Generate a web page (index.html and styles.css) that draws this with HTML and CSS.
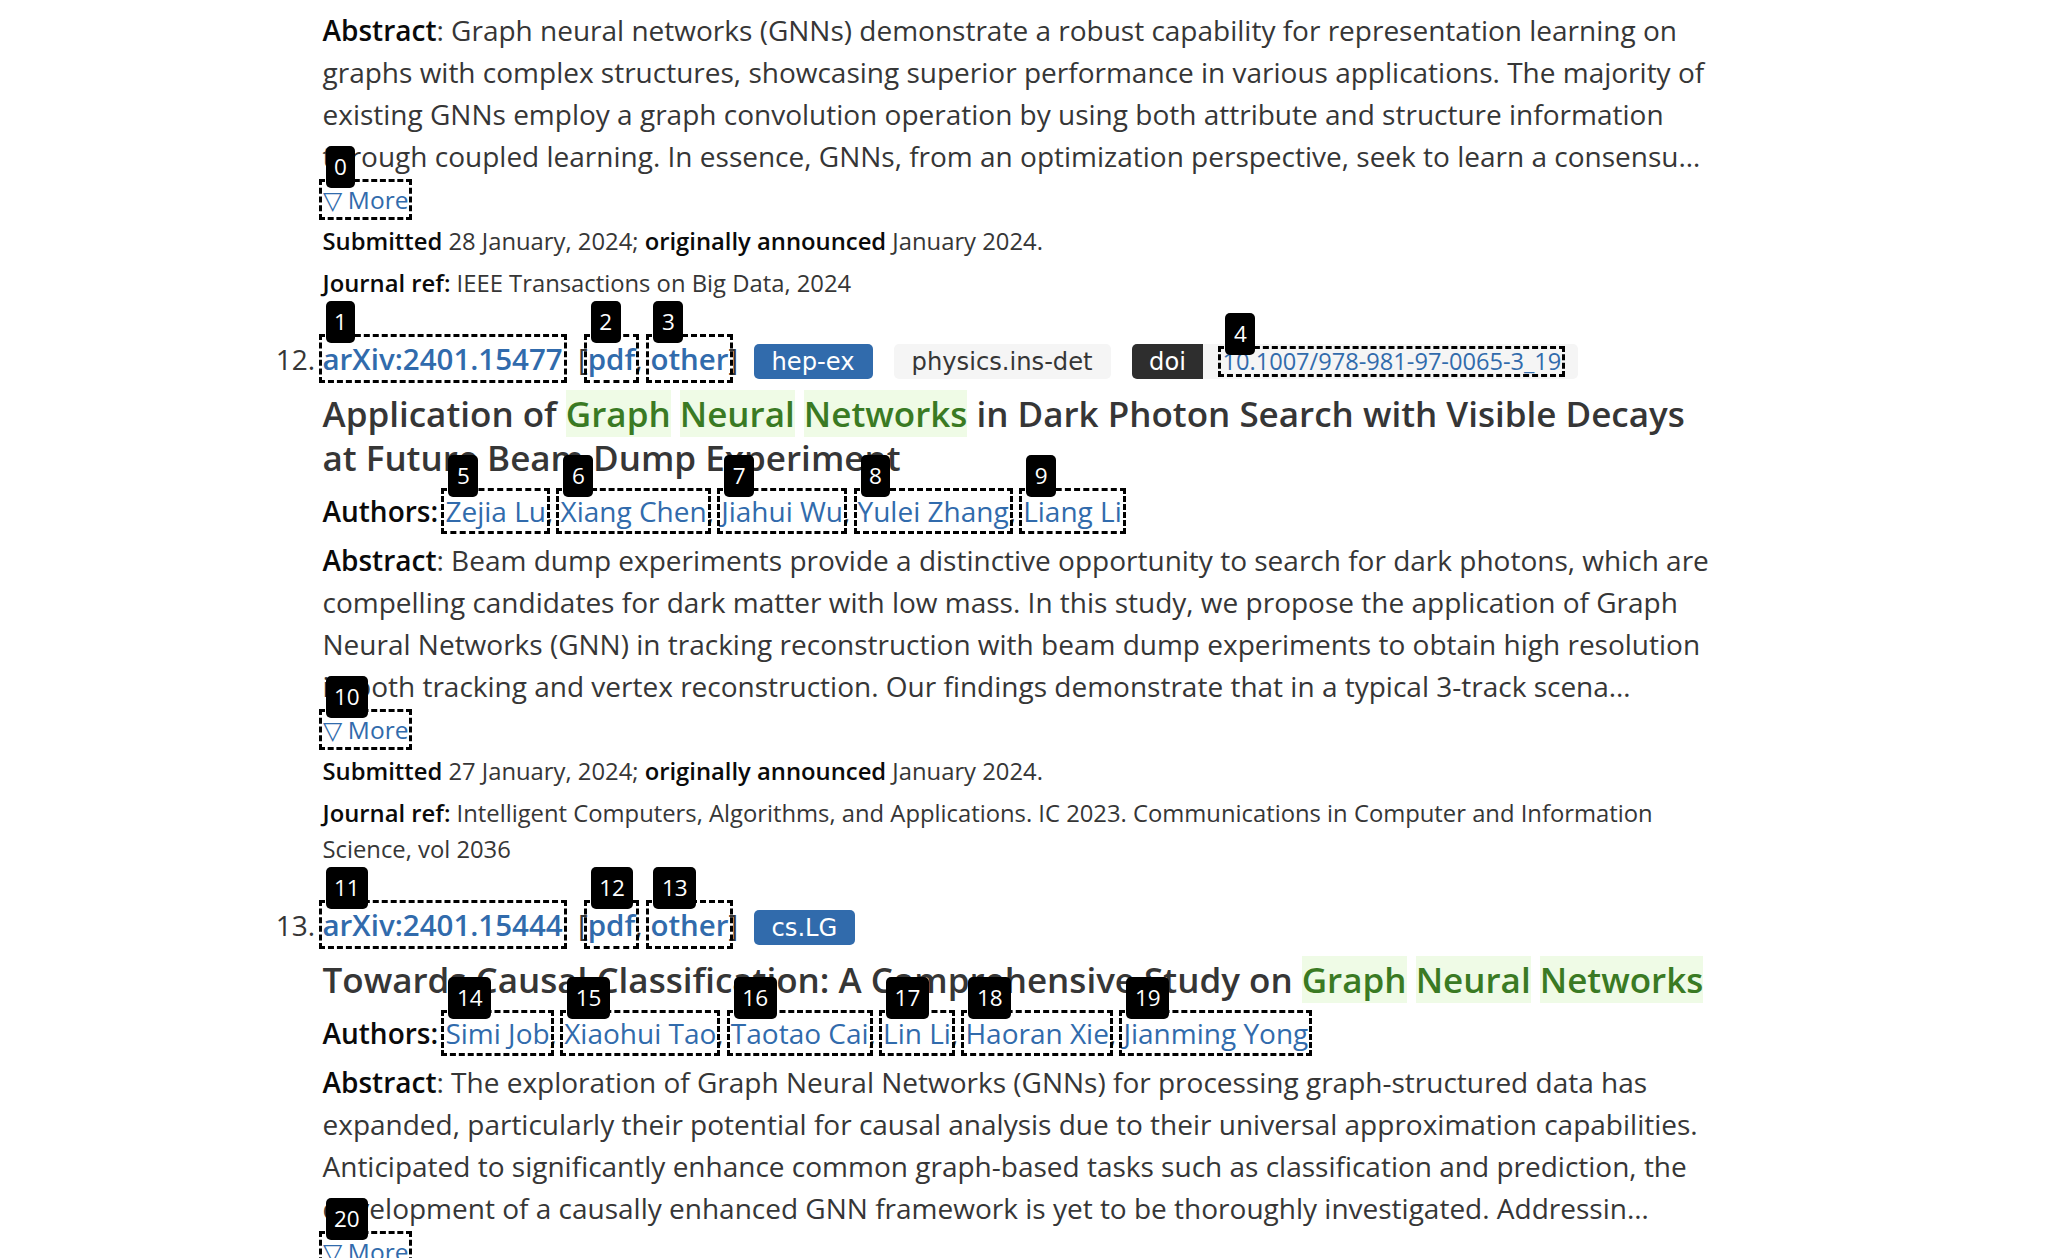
FILE: index.html
```html
<!DOCTYPE html>
<html lang="en">
<head>
<meta charset="utf-8">
<title>arXiv search results</title>
<link rel="stylesheet" href="styles.css">
</head>
<body>
<main class="page">
  <ol class="results" start="11">
    <li class="result is-cut">
      <p class="abstract"><span class="strong">Abstract</span>: Graph neural networks (GNNs) demonstrate a robust capability for representation learning on graphs with complex structures, showcasing superior performance in various applications. The majority of existing GNNs employ a graph convolution operation by using both attribute and structure information through coupled learning. In essence, GNNs, from an optimization perspective, seek to learn a consensu…<br><a class="more ann" href="#">▽ More<span class="badge">0</span></a></p>
      <p class="meta"><span class="strong">Submitted</span> 28 January, 2024; <span class="strong">originally announced</span> January 2024.</p>
      <p class="meta comments"><span class="strong">Journal ref:</span> IEEE Transactions on Big Data, 2024</p>
    </li>

    <li class="result">
      <div class="result-head"><span class="list-title"><a class="ann" href="#">arXiv:2401.15477<span class="badge">1</span></a>&nbsp; [<a class="ann" href="#">pdf<span class="badge">2</span></a>, <a class="ann" href="#">other<span class="badge">3</span></a>]&nbsp; </span><span class="tags"><span class="tag is-link">hep-ex</span><span class="tag is-grey">physics.ins-det</span><span class="tag-group"><span class="tag is-dark">doi</span><span class="tag is-light"><a class="ann doi-link" href="#">10.1007/978-981-97-0065-3_19<span class="badge">4</span></a></span></span></span></div>
      <p class="title">Application of <span class="hit">Graph</span> <span class="hit">Neural</span> <span class="hit">Networks</span> in Dark Photon Search with Visible Decays at Future Beam Dump Experiment</p>
      <p class="authors"><span class="strong">Authors:</span> <a class="ann" href="#">Zejia Lu<span class="badge">5</span></a>, <a class="ann" href="#">Xiang Chen<span class="badge">6</span></a>, <a class="ann" href="#">Jiahui Wu<span class="badge">7</span></a>, <a class="ann" href="#">Yulei Zhang<span class="badge">8</span></a>, <a class="ann" href="#">Liang Li<span class="badge">9</span></a></p>
      <p class="abstract"><span class="strong">Abstract</span>: Beam dump experiments provide a distinctive opportunity to search for dark photons, which are compelling candidates for dark matter with low mass. In this study, we propose the application of Graph Neural Networks (GNN) in tracking reconstruction with beam dump experiments to obtain high resolution in both tracking and vertex reconstruction. Our findings demonstrate that in a typical 3-track scena…<br><a class="more ann" href="#">▽ More<span class="badge">10</span></a></p>
      <p class="meta"><span class="strong">Submitted</span> 27 January, 2024; <span class="strong">originally announced</span> January 2024.</p>
      <p class="meta comments"><span class="strong">Journal ref:</span> Intelligent Computers, Algorithms, and Applications. IC 2023. Communications in Computer and Information Science, vol 2036</p>
    </li>

    <li class="result">
      <div class="result-head"><span class="list-title"><a class="ann" href="#">arXiv:2401.15444<span class="badge">11</span></a>&nbsp; [<a class="ann" href="#">pdf<span class="badge">12</span></a>, <a class="ann" href="#">other<span class="badge">13</span></a>]&nbsp; </span><span class="tags"><span class="tag is-link">cs.LG</span></span></div>
      <p class="title">Towards Causal Classification: A Comprehensive Study on <span class="hit">Graph</span> <span class="hit">Neural</span> <span class="hit">Networks</span></p>
      <p class="authors"><span class="strong">Authors:</span> <a class="ann" href="#">Simi Job<span class="badge">14</span></a>, <a class="ann" href="#">Xiaohui Tao<span class="badge">15</span></a>, <a class="ann" href="#">Taotao Cai<span class="badge">16</span></a>, <a class="ann" href="#">Lin Li<span class="badge">17</span></a>, <a class="ann" href="#">Haoran Xie<span class="badge">18</span></a>, <a class="ann" href="#">Jianming Yong<span class="badge">19</span></a></p>
      <p class="abstract"><span class="strong">Abstract</span>: The exploration of Graph Neural Networks (GNNs) for processing graph-structured data has expanded, particularly their potential for causal analysis due to their universal approximation capabilities. Anticipated to significantly enhance common graph-based tasks such as classification and prediction, the development of a causally enhanced GNN framework is yet to be thoroughly investigated. Addressin…<br><a class="more ann" href="#">▽ More<span class="badge">20</span></a></p>
    </li>
  </ol>
</main>
</body>
</html>
```

FILE: styles.css
```css
* {
  box-sizing: border-box;
}

html,
body {
  margin: 0;
  padding: 0;
  background: #ffffff;
}

body {
  font-family: "Open Sans", "Noto Sans", sans-serif;
  color: #363636;
}

a {
  color: #316bac;
  text-decoration: none;
}

.page {
  padding: 8.5px 0 0 322.5px;
}

.results {
  margin: 0;
  padding: 0;
  width: 1393px;
}

.result {
  font-size: 28px;
  line-height: 44px;
  margin: 0 0 35.5px;
}

.result::marker {
  color: #363636;
}

.result.is-cut {
  list-style-type: none;
}

.result-head {
  line-height: 44px;
  white-space: nowrap;
}

.list-title {
  font-size: 29.5px;
}

.list-title .ann {
  font-weight: 600;
}

.title {
  margin: 11px 0 0;
  font-size: 35px;
  line-height: 44px;
  font-weight: 600;
  color: #363636;
}

.hit {
  color: #3a7a23;
  background: #effbe6;
}

.authors {
  margin: 10px 0 0;
  font-size: 28px;
  line-height: 42px;
}

.abstract {
  margin: 7px 0 0;
  font-size: 28px;
  line-height: 42px;
}

.is-cut .abstract {
  margin-top: 0;
}

.meta {
  margin: 4.5px 0 0;
  font-size: 23.8px;
  line-height: 36px;
}

.meta.comments {
  margin-top: 6px;
}

.strong {
  color: #0a0a0a;
  font-weight: 600;
}

.more {
  font-size: 24.5px;
  line-height: 1;
}

.ann {
  position: relative;
  outline: 3.5px dashed #000000;
  outline-offset: 1.5px;
}

.badge {
  position: absolute;
  left: 3px;
  bottom: calc(100% - 5px);
  z-index: 2;
  padding: 6px 8.5px;
  border-radius: 5px;
  background: #000000;
  color: #ffffff;
  font-family: "Open Sans", sans-serif;
  font-size: 22.5px;
  font-weight: 400;
  line-height: 30px;
  white-space: nowrap;
}

.tags {
  display: inline-flex;
  align-items: center;
  gap: 21px;
  vertical-align: baseline;
}

.tag {
  display: inline-flex;
  align-items: center;
  height: 35px;
  padding: 0 18px;
  border-radius: 5px;
  font-family: "DejaVu Sans", sans-serif;
  font-size: 24.2px;
  line-height: 1;
  white-space: nowrap;
}

.tag.is-link {
  background: #316bac;
  color: #ffffff;
}

.tag.is-grey {
  background: #f5f5f5;
  color: #363636;
}

.tag-group {
  display: inline-flex;
  align-items: center;
}

.tag.is-dark {
  padding: 0 17.5px;
  border-radius: 5px 0 0 5px;
  background: #2e2e2e;
  color: #ffffff;
}

.tag.is-light {
  padding: 0 17px 0 19px;
  border-radius: 0 5px 5px 0;
  background: #f5f5f5;
}

.doi-link {
  font-family: "Open Sans", sans-serif;
  font-size: 23.6px;
  font-weight: 400;
}
```
